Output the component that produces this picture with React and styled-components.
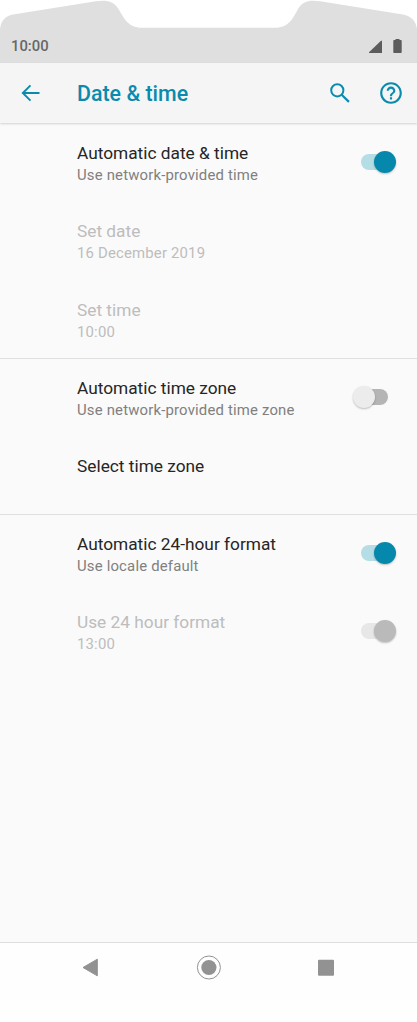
import React, { useState } from 'react';
import styled, { createGlobalStyle } from 'styled-components';

const GlobalStyle = createGlobalStyle`
  body {
    margin: 0;
    background: #fff;
    font-family: Roboto, "Noto Sans", sans-serif;
  }
`;

const Phone = styled.div`
  display: flex;
  flex-direction: column;
  width: 417px;
  height: 1022px;
  overflow: hidden;
  background: #fefefe;
`;

const StatusBar = styled.header`
  display: grid;
  flex: none;
  height: 63px;
  background: #fff;

  > * {
    grid-area: 1 / 1;
  }
`;

const StatusContent = styled.div`
  display: flex;
  align-items: flex-end;
  justify-content: space-between;
  padding: 0 15px 8px 11px;
`;

const Clock = styled.span`
  color: #676767;
  font-size: 14.8px;
  font-weight: 500;
  line-height: 17px;
`;

const StatusIcons = styled.div`
  display: flex;
  gap: 11px;
  padding-bottom: 1px;

  svg {
    display: block;
  }
`;

const AppBar = styled.div`
  display: flex;
  flex: none;
  align-items: center;
  box-sizing: border-box;
  height: 60px;
  padding: 0 13px 0 20px;
  background: #f5f5f5;
  box-shadow: 0 1px 2px rgba(0, 0, 0, 0.16);
  z-index: 1;
`;

const IconButton = styled.button`
  display: flex;
  padding: 0;
  border: 0;
  background: none;
  color: #0a8bae;
`;

const Title = styled.h1`
  flex: 1;
  margin: 2px 0 0 36px;
  color: #0a8bae;
  font-size: 21.4px;
  font-weight: 500;
  line-height: 26px;
`;

const Actions = styled.div`
  display: flex;
  align-items: center;
  gap: 28px;
`;

const Content = styled.main`
  flex: 1;
  padding-top: 1px;
  background: #fafafa;
`;

const Section = styled.section`
  box-sizing: border-box;
  height: ${props => props.$height}px;
  border-bottom: ${props => (props.$last ? 'none' : '1px solid #e0e0e0')};
`;

const Row = styled.div`
  display: flex;
  box-sizing: border-box;
  height: 78.3px;
  padding: 18px 21px 0 77px;
`;

const Label = styled.div`
  flex: 1;
  color: ${props => (props.$disabled ? '#bdbdbd' : '#262626')};
`;

const Name = styled.div`
  font-size: 17.3px;
  line-height: 22px;
  white-space: nowrap;
`;

const Summary = styled.div`
  color: ${props => (props.$disabled ? '#bdbdbd' : '#808080')};
  font-size: 14.9px;
  letter-spacing: 0.18px;
  line-height: 22px;
  white-space: nowrap;
`;

const Track = styled.span`
  flex: none;
  width: 27px;
  height: 16px;
  border-radius: 8px;
  background: ${props => props.$color};
`;

const Thumb = styled.span`
  flex: none;
  width: 22px;
  height: 22px;
  border-radius: 50%;
  background: ${props => props.$color};
  box-shadow: 0 1px 2px rgba(0, 0, 0, 0.25);
  z-index: 1;
`;

const Switch = styled.button`
  display: flex;
  flex-direction: ${props => (props.$on ? 'row' : 'row-reverse')};
  align-items: center;
  justify-content: flex-end;
  width: 35px;
  height: 22px;
  margin: 9px ${props => (props.$on ? 0 : 8)}px 0 0;
  padding: 0;
  border: 0;
  background: none;

  ${Track} {
    margin: ${props => (props.$on ? '0 -14px 0 0' : '0 0 0 -14px')};
  }
`;

const NavBar = styled.nav`
  display: flex;
  flex: none;
  align-items: flex-start;
  justify-content: space-between;
  box-sizing: border-box;
  height: 80px;
  padding: 12px 82px 0 81px;
  border-top: 1px solid #dedede;
  background: #fefefe;
`;

const sections = [
  {
    height: 235,
    rows: [
      { name: 'Automatic date & time', summary: 'Use network-provided time', toggle: true, on: true },
      { name: 'Set date', summary: '16 December 2019', disabled: true },
      { name: 'Set time', summary: '10:00', disabled: true },
    ],
  },
  {
    height: 156,
    rows: [
      { name: 'Automatic time zone', summary: 'Use network-provided time zone', toggle: true },
      { name: 'Select time zone' },
    ],
  },
  {
    height: 157,
    rows: [
      { name: 'Automatic 24-hour format', summary: 'Use locale default', toggle: true, on: true },
      { name: 'Use 24 hour format', summary: '13:00', toggle: true, on: true, disabled: true },
    ],
  },
];

const trackColor = (on, disabled) => {
  if (disabled) return '#e7e7e7';
  return on ? '#b4dde6' : '#b5b5b5';
};

const thumbColor = (on, disabled) => {
  if (disabled) return '#bababa';
  return on ? '#0688ad' : '#ececec';
};

const Setting = ({ name, summary, toggle, on, disabled }) => {
  const [checked, setChecked] = useState(!!on);

  return (
    <Row>
      <Label $disabled={disabled}>
        <Name>{name}</Name>
        {summary && <Summary $disabled={disabled}>{summary}</Summary>}
      </Label>
      {toggle && (
        <Switch
          $on={checked}
          disabled={disabled}
          role="switch"
          aria-checked={checked}
          aria-label={name}
          onClick={() => setChecked(!checked)}
        >
          <Track $color={trackColor(checked, disabled)} />
          <Thumb $color={thumbColor(checked, disabled)} />
        </Switch>
      )}
    </Row>
  );
};

const Notch = () => (
  <svg width="417" height="63" viewBox="0 0 417 63">
    <path
      fill="#dfdfdf"
      d="M0 63V29C1 21 5 16 13 14.5L96 1.3C107-.3 114 1.5 118.5 9C124 18 128 27.8 142 27.8H275C289 27.8 293 18 298 9C302.500 1.5 309-.3 320 1.3L403 14.5C411 16 416 21 417 29V63Z"
    />
  </svg>
);

const App = () => {
  return (
    <Phone>
      <GlobalStyle />
      <StatusBar>
        <Notch />
        <StatusContent>
          <Clock>10:00</Clock>
          <StatusIcons>
            <svg width="13" height="15" viewBox="0 0 13 15">
              <path fill="#5c5c5c" d="M0 14V13.3L12 1.7H13V14Z" />
            </svg>
            <svg width="9" height="15" viewBox="0 0 9 15">
              <path fill="#5c5c5c" d="M2.5 0H6.500V1H8Q8.700 1 8.700 2V13Q8.700 14 8 14H1Q.3 14 .3 13V2Q.3 1 1 1H2.500Z" />
            </svg>
          </StatusIcons>
        </StatusContent>
      </StatusBar>
      <AppBar>
        <IconButton aria-label="Back">
          <svg width="21" height="18" viewBox="0 0 21 18" fill="none" stroke="currentColor" strokeWidth="1.9">
            <path d="M19.5 9H3M10.5 1.3 2.8 9 10.5 16.7" />
          </svg>
        </IconButton>
        <Title>Date &amp; time</Title>
        <Actions>
          <IconButton aria-label="Search">
            <svg width="20" height="20" viewBox="0 0 20 20" fill="none" stroke="currentColor" strokeWidth="2">
              <circle cx="7.3" cy="7.3" r="6.1" />
              <path strokeWidth="2.2" d="M11.7 11.7 18.9 18.9" />
            </svg>
          </IconButton>
          <IconButton aria-label="Help">
            <svg width="26" height="26" viewBox="0 0 24 24" fill="currentColor">
              <path d="M11 18h2v-2h-2v2zm1-16C6.480 2 2 6.480 2 12s4.480 10 10 10 10-4.480 10-10S17.520 2 12 2zm0 18c-4.410 0-8-3.590-8-8s3.590-8 8-8 8 3.590 8 8-3.590 8-8 8zm0-14c-2.210 0-4 1.790-4 4h2c0-1.100.9-2 2-2s2 .9 2 2c0 2-3 1.750-3 5h2c0-2.250 3-2.500 3-5 0-2.210-1.790-4-4-4z" />
            </svg>
          </IconButton>
        </Actions>
      </AppBar>
      <Content>
        {sections.map((section, i) => (
          <Section key={i} $height={section.height} $last={i === sections.length - 1}>
            {section.rows.map(row => (
              <Setting key={row.name} {...row} />
            ))}
          </Section>
        ))}
      </Content>
      <NavBar>
        <IconButton aria-label="Go back">
          <svg width="18" height="26" viewBox="0 0 18 26">
            <path fill="#929292" stroke="#929292" strokeLinejoin="round" d="M2 12.5 16.3 4.2V20.8Z" />
          </svg>
        </IconButton>
        <IconButton aria-label="Home">
          <svg width="25" height="26" viewBox="0 0 25 26">
            <circle cx="12.9" cy="12.5" r="11.5" fill="none" stroke="#929292" />
            <circle cx="12.9" cy="12.5" r="7.6" fill="#929292" />
          </svg>
        </IconButton>
        <IconButton aria-label="Recent apps">
          <svg width="18" height="26" viewBox="0 0 18 26">
            <rect x="1" y="4.7" width="16" height="16" rx="1" fill="#929292" />
          </svg>
        </IconButton>
      </NavBar>
    </Phone>
  );
};

export default App;
